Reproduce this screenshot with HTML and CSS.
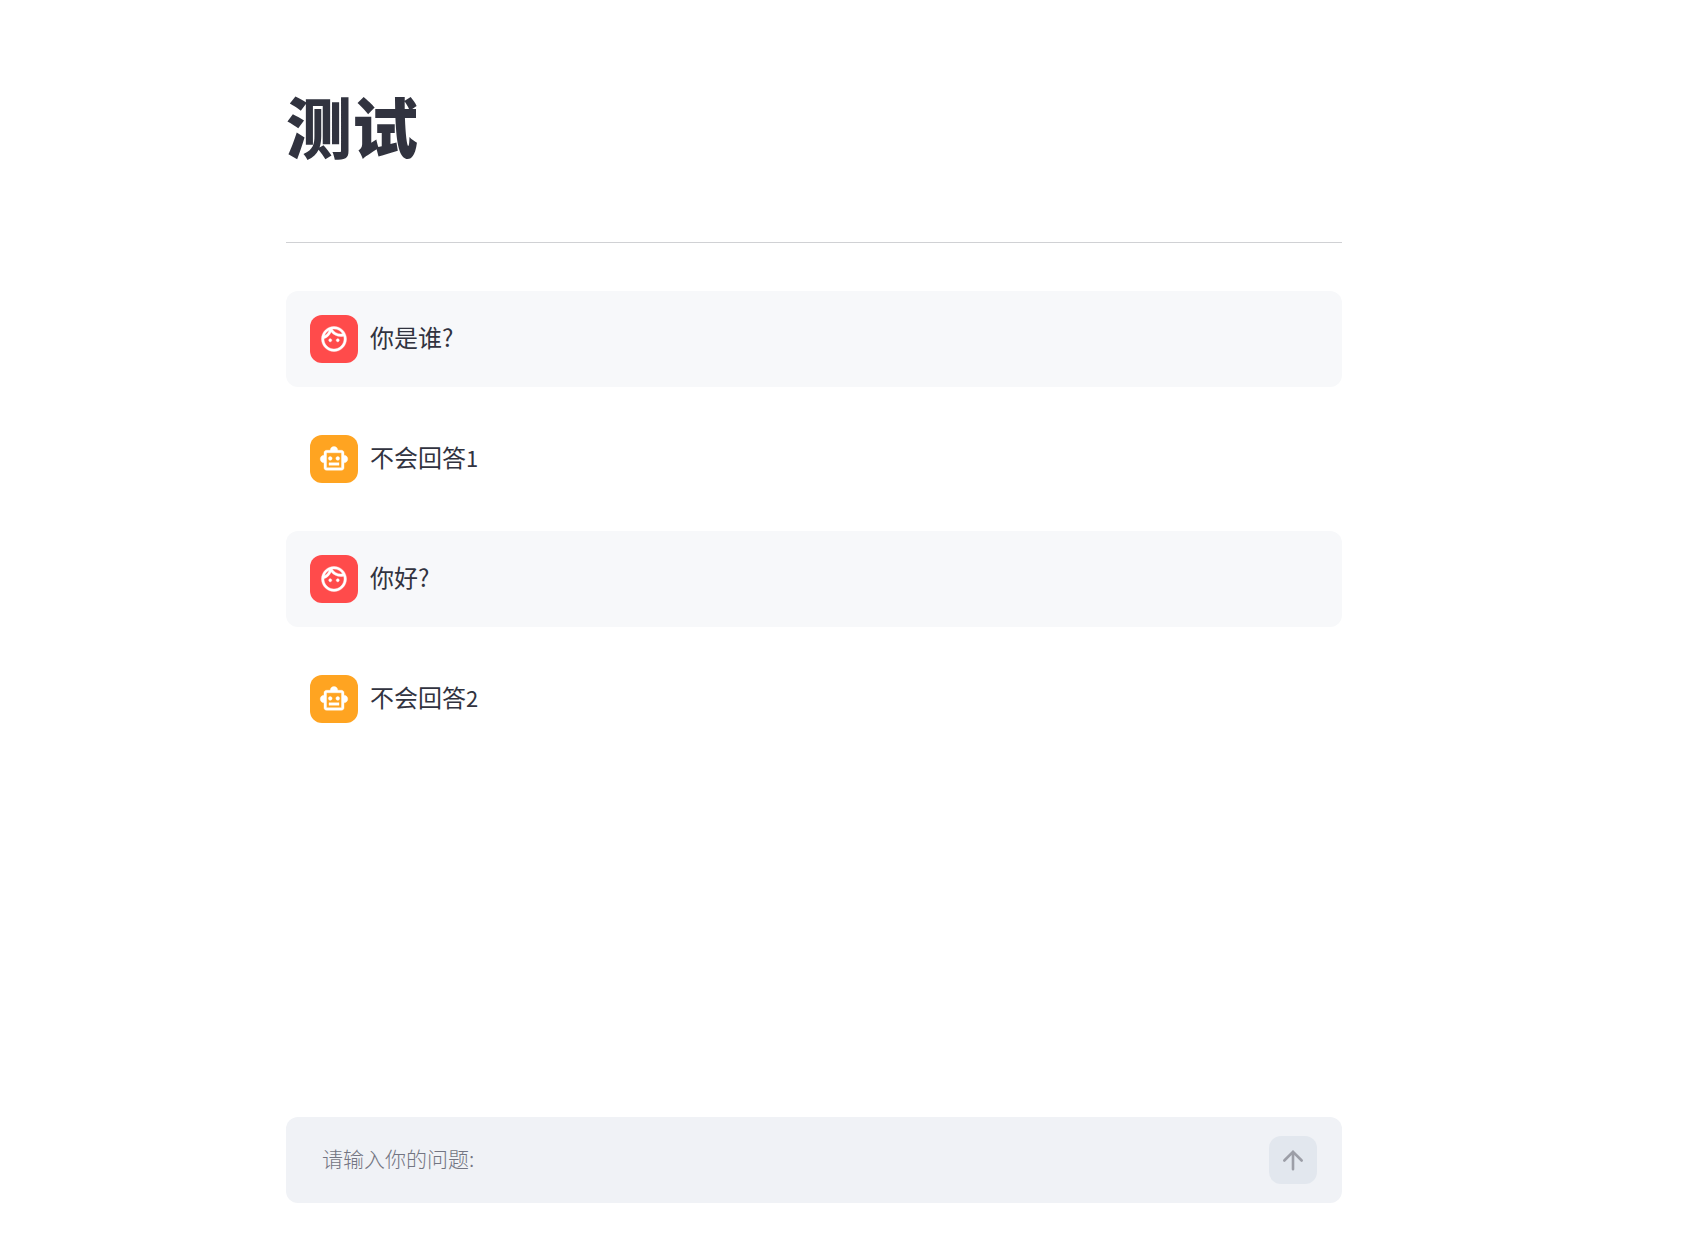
FILE: index.html
```html
<!DOCTYPE html>
<html lang="zh-CN">
<head>
  <meta charset="UTF-8">
  <meta name="viewport" content="width=device-width, initial-scale=1">
  <title>测试</title>
  <link rel="stylesheet" href="styles.css">
</head>
<body>

  <!-- icons -->
  <svg class="icon-defs" aria-hidden="true">
    <symbol id="icon-user" viewBox="0 0 24 24">
      <path d="M10.25 13c0 .69-.56 1.25-1.25 1.25S7.75 13.69 7.75 13s.56-1.25 1.25-1.25 1.25.56 1.25 1.25zM15 11.75c-.69 0-1.25.56-1.25 1.25s.56 1.25 1.25 1.25 1.25-.56 1.25-1.25-.56-1.25-1.25-1.25zM22 12c0 5.52-4.48 10-10 10S2 17.52 2 12 6.48 2 12 2s10 4.48 10 10zM10.66 4.12C12.06 6.44 14.6 8 17.5 8c.46 0 .91-.05 1.34-.12C17.44 5.56 14.9 4 12 4c-.46 0-.91.05-1.34.12zM4.42 9.47c1.71-.97 3.03-2.55 3.66-4.44C6.37 6 5.05 7.58 4.42 9.47zM20 12c0-.78-.12-1.53-.33-2.24-.7.15-1.42.24-2.17.24-3.13 0-5.92-1.44-7.76-3.69C8.69 8.87 6.6 10.88 4 11.86c.01.04 0 .09 0 .14 0 4.41 3.59 8 8 8s8-3.59 8-8z"/>
    </symbol>
    <symbol id="icon-bot" viewBox="0 0 24 24">
      <path d="M20 9V7c0-1.1-.9-2-2-2h-3c0-1.66-1.34-3-3-3S9 3.34 9 5H6c-1.1 0-2 .9-2 2v2c-1.66 0-3 1.34-3 3s1.34 3 3 3v4c0 1.1.9 2 2 2h12c1.1 0 2-.9 2-2v-4c1.66 0 3-1.34 3-3s-1.34-3-3-3zm-2 10H6V7h12v12zm-9-6c-.83 0-1.5-.67-1.5-1.5S8.17 10 9 10s1.5.67 1.5 1.5S9.83 13 9 13zm7.5-1.5c0 .83-.67 1.5-1.5 1.5s-1.5-.67-1.5-1.5.67-1.5 1.5-1.5 1.5.67 1.5 1.5zM8 15h8v2H8v-2z"/>
    </symbol>
  </svg>

  <div class="page">
    <main>
      <h1>测试</h1>
      <hr>

      <div class="chat">
        <div class="message user">
          <div class="avatar"><svg><use href="#icon-user"/></svg></div>
          <p>你是谁?</p>
        </div>
        <div class="message bot">
          <div class="avatar"><svg><use href="#icon-bot"/></svg></div>
          <p>不会回答<span class="num">1</span></p>
        </div>
        <div class="message user">
          <div class="avatar"><svg><use href="#icon-user"/></svg></div>
          <p>你好?</p>
        </div>
        <div class="message bot">
          <div class="avatar"><svg><use href="#icon-bot"/></svg></div>
          <p>不会回答<span class="num">2</span></p>
        </div>
      </div>
    </main>

    <!-- chat input -->
    <form class="chat-input">
      <input type="text" aria-label="请输入你的问题" placeholder="请输入你的问题:">
      <button type="submit" aria-label="发送" disabled>
        <svg viewBox="0 0 24 24"><path d="M12 20.5V4.5M4 12.5l8-8 8 8"/></svg>
      </button>
    </form>
  </div>

</body>
</html>
```
FILE: styles.css
```css
* { margin: 0; padding: 0; box-sizing: border-box; }
body {
  font-family: "Noto Sans CJK SC", sans-serif;
  font-size: 24px;
  line-height: 44px;
  color: #31333f;
  background: #fff;
}
.icon-defs { display: none; }

.page {
  min-height: 100vh;
  padding: 84px 77px 37px 24px;
  display: flex;
  flex-direction: column;
  align-items: center;
}
main {
  width: 100%;
  max-width: 1056px;
  flex: 1;
}
h1 {
  font-size: 66px;
  line-height: 80px;
  font-weight: 900;
}
hr {
  border: none;
  border-top: 1px solid #d0d1d4;
  margin: 78px 0 48px;
}

/* messages */
.chat {
  display: flex;
  flex-direction: column;
  gap: 24px;
}
.message {
  display: flex;
  align-items: flex-start;
  gap: 12px;
  padding: 24px;
  border-radius: 12px;
}
.message.user { background: #f7f8fa; }
.num { font-size: 22px; }

.avatar {
  width: 48px;
  height: 48px;
  flex-shrink: 0;
  display: flex;
  align-items: center;
  justify-content: center;
  border-radius: 12px;
  color: #fff;
}
.avatar svg {
  width: 30px;
  height: 30px;
  fill: currentColor;
  stroke: currentColor;
  stroke-width: 0.3;
}
.user .avatar { background: #ff4b4b; }
.bot .avatar { background: #ffa421; }

/* input bar */
.chat-input {
  width: 100%;
  max-width: 1056px;
  margin-top: 24px;
  padding: 19px 25px 19px 36px;
  display: flex;
  align-items: center;
  gap: 24px;
  background: #f0f2f6;
  border-radius: 12px;
}
.chat-input input {
  flex: 1;
  min-width: 0;
  height: 48px;
  padding-bottom: 4px;
  border: none;
  outline: none;
  background: transparent;
  font-family: inherit;
  font-size: 21px;
  font-weight: 300;
  color: #31333f;
}
.chat-input input::placeholder { color: #737582; opacity: 1; }
.chat-input button {
  width: 48px;
  height: 48px;
  display: flex;
  align-items: center;
  justify-content: center;
  border: none;
  border-radius: 12px;
  background: #e2e7ee;
  color: #9c9ea7;
}
.chat-input button svg {
  width: 26px;
  height: 26px;
  fill: none;
  stroke: currentColor;
  stroke-width: 2.4;
  stroke-linecap: round;
}
```
